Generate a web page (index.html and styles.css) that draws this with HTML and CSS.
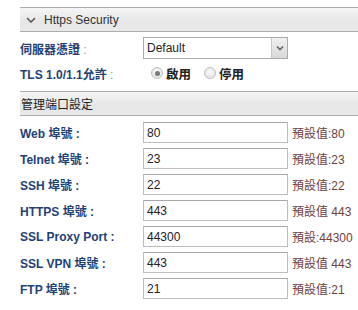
FILE: index.html
```html
<!DOCTYPE html>
<html>
<head>
<meta charset="utf-8">
<link rel="stylesheet" href="styles.css">
</head>
<body>
<div class="panel">
  <div class="section-head first">
    <svg class="chev" width="10" height="6" viewBox="0 0 10 6"><path d="M1 1 L5 5 L9 1" fill="none" stroke="#555" stroke-width="1.5"/></svg>
    <span>Https Security</span>
  </div>
  <div class="row row-select">
    <div class="label">伺服器憑證 <span class="colon">:</span></div>
    <div class="select">
      <span class="select-text">Default</span>
      <span class="select-btn"><svg width="8" height="6" viewBox="0 0 8 6"><path d="M1 1.5 L4 4.5 L7 1.5" fill="none" stroke="#666" stroke-width="1.6"/></svg></span>
    </div>
  </div>
  <div class="row row-tls">
    <div class="label">TLS 1.0/1.1允許 <span class="colon">:</span></div>
    <div class="radios">
      <span class="radio checked"></span><span class="rtext">啟用</span>
      <span class="radio"></span><span class="rtext">停用</span>
    </div>
  </div>
  <div class="section-head second">
    <span>管理端口設定</span>
  </div>
  <div class="ports">
    <div class="prow"><div class="label">Web 埠號 :</div><div class="input">80</div><div class="def">預設值:80</div></div>
    <div class="prow"><div class="label">Telnet 埠號 :</div><div class="input">23</div><div class="def">預設值:23</div></div>
    <div class="prow"><div class="label">SSH 埠號 :</div><div class="input">22</div><div class="def">預設值:22</div></div>
    <div class="prow"><div class="label">HTTPS 埠號 :</div><div class="input">443</div><div class="def">預設值 443</div></div>
    <div class="prow"><div class="label">SSL Proxy Port :</div><div class="input">44300</div><div class="def">預設:44300</div></div>
    <div class="prow"><div class="label">SSL VPN 埠號 :</div><div class="input">443</div><div class="def">預設值 443</div></div>
    <div class="prow"><div class="label">FTP 埠號 :</div><div class="input">21</div><div class="def">預設值:21</div></div>
  </div>
</div>
</body>
</html>
```

FILE: styles.css
```css
html, body {
  margin: 0;
  padding: 0;
  background: #fff;
}
body {
  font-family: "Liberation Sans", Arial, "Noto Sans CJK TC", sans-serif;
  font-size: 12px;
  color: #333;
}
.panel {
  padding: 7px 0 0 20px;
}
.section-head {
  height: 23px;
  border-top: 1px solid #acacac;
  border-bottom: 1px solid #acacac;
  background: linear-gradient(#f5f5f5, #e6e6e6 60%, #e9e9e9);
  display: flex;
  align-items: center;
  color: #333;
}
.section-head.first {
  padding-left: 6px;
}
.section-head.first .chev {
  margin-right: 8px;
}
.section-head.second {
  margin-top: 5px;
  padding-left: 1px;
  color: #222;
}
.row {
  display: flex;
  align-items: center;
}
.row-select {
  margin-top: 5px;
  height: 22px;
}
.row-tls {
  margin-top: 1px;
  height: 26px;
}
.label {
  width: 123px;
  flex: none;
  font-weight: bold;
  color: #1f4275;
  white-space: nowrap;
}
.label .colon {
  color: #9a9a9a;
  font-weight: normal;
}
.select {
  width: 143px;
  height: 20px;
  border: 1px solid #ababab;
  display: flex;
  align-items: center;
  justify-content: space-between;
  background: #fff;
}
.select-text {
  padding-left: 3px;
  color: #222;
}
.select-btn {
  width: 15px;
  height: 20px;
  border-left: 1px solid #c8c8c8;
  background: linear-gradient(#f0f0f0, #d9d9d9);
  display: flex;
  align-items: center;
  justify-content: center;
}
.radios {
  display: flex;
  align-items: center;
  padding-left: 8px;
  font-weight: bold;
  color: #222;
}
.radio {
  width: 10px;
  height: 10px;
  border-radius: 50%;
  border: 1px solid #c0c0c0;
  background: radial-gradient(circle at 50% 40%, #fafafa, #dedede);
  position: relative;
  margin-right: 3px;
}
.radio.checked::after {
  content: "";
  position: absolute;
  left: 2.5px;
  top: 2.5px;
  width: 5px;
  height: 5px;
  border-radius: 50%;
  background: #7a7a7a;
}
.rtext {
  margin-right: 13px;
  font-size: 12.5px;
}
.ports {
  padding-top: 6px;
}
.prow {
  display: flex;
  align-items: center;
  height: 21px;
  margin-bottom: 5px;
}
.input {
  width: 140px;
  height: 19px;
  border: 1px solid #bdbdbd;
  border-top-color: #a8a8a8;
  display: flex;
  align-items: center;
  padding-left: 3px;
  box-sizing: content-box;
  color: #222;
}
.def {
  margin-left: 4px;
  color: #6e3f3f;
  white-space: nowrap;
}
```
